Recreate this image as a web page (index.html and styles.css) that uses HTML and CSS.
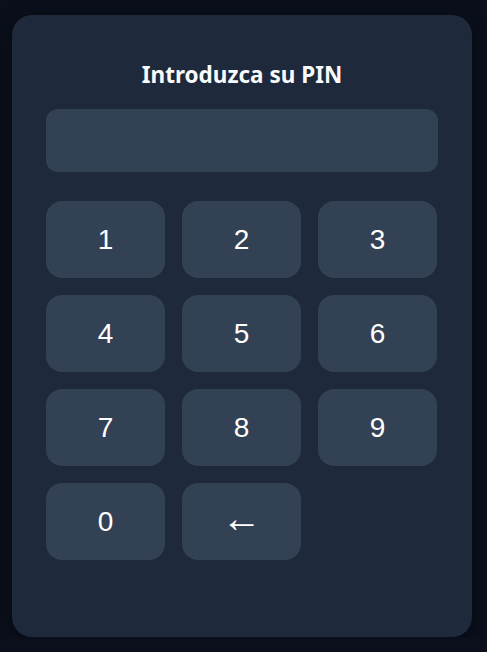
FILE: index.html
```html
<!DOCTYPE html>
<html lang="es">
<head>
    <meta charset="UTF-8">
    <meta name="viewport" content="width=device-width, initial-scale=1.0">
    <title>PIN</title>
    <link rel="stylesheet" href="styles.css">
</head>
<body>
    <div class="pin-card">
        <h2 class="pin-title">Introduzca su PIN</h2>
        <div class="pin-display"></div>

        <div class="keypad">
            <button class="key">1</button>
            <button class="key">2</button>
            <button class="key">3</button>
            <button class="key">4</button>
            <button class="key">5</button>
            <button class="key">6</button>
            <button class="key">7</button>
            <button class="key">8</button>
            <button class="key">9</button>
            <button class="key">0</button>
            <button class="key key-back">&larr;</button>
        </div>
    </div>
</body>
</html>
```

FILE: styles.css
```css
* {
    box-sizing: border-box;
}
body {
    margin: 0;
    padding: 15px 0 0 12px;
    background: #0a0f1b;
    font-family: "Noto Sans", "Open Sans", sans-serif;
}
.pin-card {
    width: 460px;
    height: 622px;
    padding: 46px 34px 0 34px;
    background: #1e293b;
    border-radius: 20px;
    box-shadow: 0 4px 16px rgba(0, 0, 0, 0.35);
}
.pin-title {
    margin: 0 0 20px;
    height: 28px;
    line-height: 28px;
    font-size: 22.5px;
    font-weight: 700;
    color: #f8fafc;
    text-align: center;
}
.pin-display {
    height: 63px;
    background: #334155;
    border-radius: 12px;
    margin-bottom: 29px;
}
.keypad {
    display: grid;
    grid-template-columns: repeat(3, 119px);
    grid-auto-rows: 77px;
    gap: 17px;
}
.key {
    border: none;
    border-radius: 16px;
    background: #334155;
    color: #ffffff;
    font-family: "Liberation Sans", Arial, sans-serif;
    font-size: 28px;
    cursor: pointer;
}
.key-back {
    font-size: 40px;
    line-height: 1;
    padding-bottom: 8px;
}
```
